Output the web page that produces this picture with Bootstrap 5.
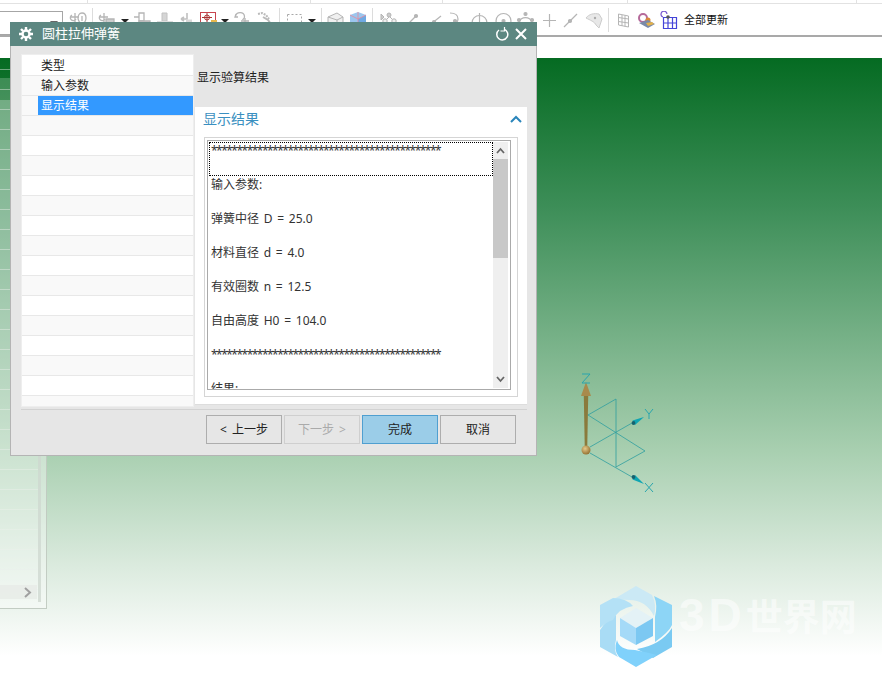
<!DOCTYPE html>
<html lang="zh-CN">
<head>
  <meta charset="UTF-8" />
  <title>圆柱拉伸弹簧</title>
  <link href="https://cdn.jsdelivr.net/npm/bootstrap@5.3.0/dist/css/bootstrap.min.css" rel="stylesheet">
  <style>
    html, body { height: 100%; }
    body { font-family: "Noto Sans", "Noto Sans CJK SC", sans-serif; font-size: 12px; color: #222; background: #fff; overflow: hidden; }
    .app-page { height: 681px; width: 882px; position: relative; }

    /* toolbar */
    .tool-bar { height: 37px; border-bottom: 2px solid #a9a9a9; position: relative; }
    .tool-top { height: 4px; border-bottom: 1px solid #e2e2e2; display: flex; }
    .tool-tick { border-right: 1px solid #e2e2e2; }
    .tick-a { width: 88px; } .tick-b { width: 223px; } .tick-c { width: 132px; } .tick-d { width: 185px; } .tick-e { width: 229px; }
    .tool-row { display: grid; height: 24px; margin-top: 7px;
      grid-template-columns: 64px 28px 2px 26px 10px 24px 22px 20px 24px 10px 22px 27px 2px 26px 10px 4px 2px 24px 25px 2px 30px 26px 16px 22px 22px 24px 22px 22px 26px 24px 2px 24px 25px 23px auto; }
    .tool-row svg { display: block; height: 24px; width: 100%; }
    .tool-combo { height: 24px; width: 63px; border: 1px solid #a6a6a6; border-left: 0; position: relative; }
    .tool-combo::after { content: ""; position: absolute; right: 4px; top: 9px; border: 4px solid transparent; border-top: 5px solid #666; }
    .tool-sep { width: 1px; background: #dcdcdc; height: 24px; margin-top: -3px; }
    .tool-caret { align-self: center; justify-self: center; border: 4px solid transparent; border-top: 4px solid #222; margin-top: -1px; }
    .tool-label { font-size: 11px; color: #111; line-height: 17px; white-space: nowrap; margin-left: 2px; }
    .tool-gap { height: 21px; }

    /* modelling canvas */
    .model-view { height: 623px; position: relative;
      background: linear-gradient(180deg, #056b22 0%, #3d8e58 24%, #a8cfb0 63%, #dcebdf 82%, #ffffff 96%); }
    .side-panel { position: absolute; left: 0; top: 0; width: 47px; height: 551px; border-right: 1px solid rgba(190,200,190,.9); border-bottom: 1px solid rgba(190,200,190,.9); display: flex;
      background: linear-gradient(180deg, transparent 0 20px, rgba(255,255,255,.2) 20px 42px, rgba(255,255,255,.4) 42px); }
    .side-rows { width: 38px; background: repeating-linear-gradient(180deg, transparent 0 19px, rgba(235,240,235,.45) 19px 20px); background-position: 0 -8px; position: relative; }
    .side-hscroll { position: absolute; left: 0; right: 1px; bottom: 9px; height: 14px; background: rgba(232,236,232,.9); }
    .side-hscroll svg { position: absolute; right: 4px; top: 2px; }
    .side-vscroll { width: 3px; margin-bottom: 6px; background: rgba(205,215,207,.75); }
    .triad-svg { position: absolute; left: 570px; top: 310px; }
    .brand-wrap { position: absolute; left: 600px; top: 528px; display: flex; align-items: center; gap: 6px; }
    .brand-name { color: rgba(255,255,255,.55); font-weight: 700; line-height: 1; white-space: nowrap; margin-top: -24px; font-family: "Liberation Sans", "Noto Sans CJK SC", sans-serif; }
    .brand-latin { font-size: 46px; letter-spacing: 4px; }
    .brand-cjk { font-size: 37px; }

    /* dialog */
    .nx-dialog { position: absolute; left: 10px; top: 22px; width: 527px; height: 434px; background: #e6e6e6; border: 1px solid #b4b4b4; border-top: 0; }
    .nx-title { height: 24px; margin: 0 -1px; background: #5c8781; color: #fff; font-size: 13px; padding: 0 9px 0 8px; }
    .nx-title-text { margin-left: 8px; }
    .nx-close { margin-left: 5px; }
    .nx-main { display: flex; gap: 1px; height: 353px; margin: 8px 9px 0 10px; }
    .step-list { width: 173px; overflow: hidden; background: #fff; border: 1px solid #eee; border-radius: 0; flex: none; }
    .step-list .list-group-item { flex: none; height: 20px; padding: 0 0 0 19px; font-size: 12px; line-height: 19px; background: #fff; border: 0; border-bottom: 1px solid #e8e8e8; color: #222; }
    .step-list .list-group-item:first-child { height: 21px; line-height: 21px; }
    .step-list .list-group-item:nth-child(even) { background: #f9f9f9; }
    .step-list .step-on { background: linear-gradient(90deg, #f9f9f9 0 16px, #3399ff 16px) !important; color: #fff; }
    .right-pane { flex: 1; min-width: 0; }
    .step-head { height: 53px; padding: 14px 0 0 2px; line-height: 20px; color: #222; }
    .res-group { height: 298px; background: #fff; border-bottom: 1px solid #ddd; }
    .res-head { height: 30px; padding: 0 5px 7px 8px; color: #3a8fc0; font-size: 14px; }
    .res-outer { margin-left: 9px; width: 314px; height: 260px; border: 1px solid #d5d5d5; padding: 2px; }
    .res-box { height: 250px; width: 304px; border: 1px solid #aaa; display: flex; overflow: hidden; }
    .res-text { flex: 1; min-width: 0; padding: 1px 0 0 1px; overflow: hidden; }
    .res-line { height: 34px; line-height: 17px; padding-left: 2px; white-space: nowrap; color: #333; word-spacing: 1.6px; }
    .res-first { width: 284px; border: 1px dotted #000; padding-left: 1px; line-height: 15px; }
    .res-stars { letter-spacing: -1.52px; }
    .res-scroll { width: 15px; margin: 1px 2px 1px 0; background: #efefef; display: flex; flex-direction: column; flex: none; }
    .res-arrow { height: 17px; display: flex; align-items: center; justify-content: center; }
    .res-thumb { height: 99px; background: #c8c8c8; }
    .nx-foot { margin: 2px 9px 0 10px; border-top: 1px solid #d2d2d2; padding: 5px 0 0 185px; }
    .nx-btn { width: 76px; height: 29px; padding: 0; font-size: 12px; line-height: 26px; border-radius: 0; border: 1px solid #adadad; background: #e6e6e6; color: #222; font-family: inherit; word-spacing: 2px; }
    .nx-btn:disabled { background: #e6e6e6; border-color: #cfcfcf; color: #aaa; opacity: 1; }
    .nx-btn-main { background: #9bcde8; border-color: #4f9fd0; }
    .nx-btn-row { gap: 2px; }
  </style>
</head>
<body>
<div class="app-page">

  <!-- toolbar -->
  <div class="tool-bar">
    <div class="tool-top">
      <div class="tool-tick tick-a"></div><div class="tool-tick tick-b"></div><div class="tool-tick tick-c"></div><div class="tool-tick tick-d"></div><div class="tool-tick tick-e"></div>
    </div>
    <div class="tool-row">
      <div class="tool-combo"></div>
      <svg viewBox="64 11 28 24" fill="none" stroke="#b5b5b5" stroke-width="1.3"><path d="M75 13v11M70 17h9M72 15a3 3 0 1 0 4 4"/><path d="M82 13c-3 0-4 3-4 5s2 6 4 6 4-3 4-6-1-5-4-5zM82 16v5"/></svg>
      <div class="tool-sep"></div>
      <svg viewBox="94 11 26 24" fill="none" stroke="#b5b5b5" stroke-width="1.3"><path d="M104 13v11M99 17h9M101 15a3 3 0 1 0 4 4"/><path d="M106 19h8v5h-8z" fill="#ccc"/></svg>
      <div class="tool-caret"></div>
      <svg viewBox="130 11 24 24" fill="none" stroke="#b5b5b5" stroke-width="1.3"><path d="M139 13h5v8h-5zM134 17h5"/><path d="M139 21h11v4h-11z" fill="#d2d2d2"/></svg>
      <svg viewBox="154 11 22 24" fill="none"><path d="M162 13h5v8h-5z" fill="#d5d5d5" stroke="#c2c2c2"/><path d="M157 21h16v4h-16z" fill="#dedede"/></svg>
      <svg viewBox="176 11 20 24" fill="none" stroke="#c0c0c0" stroke-width="1.6"><path d="M187 13v6h-6M181 19l3-2M181 19l3 2"/><path d="M186 21h6" stroke="#d8d8d8" stroke-width="3"/></svg>
      <svg viewBox="196 11 24 24" fill="none"><rect x="200.500" y="12.500" width="15" height="15" fill="#fff" stroke="#c8454f"/><path d="M202 17.500h10M207 13v9" stroke="#a33" /><circle cx="207" cy="17.500" r="2.500" stroke="#a33"/><path d="M211 20h6v4h-6z" fill="#e8b84c"/></svg>
      <div class="tool-caret"></div>
      <svg viewBox="230 11 22 24" fill="none" stroke="#b5b5b5" stroke-width="1.3"><path d="M236 14l-1 3 3 0M235.500 16c1-4 8-5 9 0 .5 2-1 3-2 4"/><path d="M245 18v6M241 21h8"/></svg>
      <svg viewBox="252 11 27 24" fill="none" stroke="#bbb" stroke-width="2"><path d="M258 14l4-1 4 2 3 4" stroke-dasharray="2 1"/><path d="M263 17l5 3 3 4"/></svg>
      <div class="tool-sep"></div>
      <svg viewBox="281 11 26 24" fill="none" stroke="#a8a8a8"><path d="M287.500 14.500h14v12M287.500 14.500v12" stroke-dasharray="2 2"/></svg>
      <div class="tool-caret"></div>
      <div></div>
      <div class="tool-sep"></div>
      <svg viewBox="323 11 24 24" fill="none" stroke="#b5b5b5"><path d="M328 17l9-4 6 4v8l-9 2-6-4z" fill="#f0f0f0"/><path d="M328 17l9 3 6-3M337 20v6"/></svg>
      <svg viewBox="347 11 25 24" fill="none"><path d="M350 15l8-3 8 3v10l-8 3-8-3z" fill="#9cc6ee"/><path d="M358 19l8-4v10l-8 3z" fill="#6fa9e3"/><path d="M350 15l8 4 8-4M358 12v16" stroke="#e98a9a" stroke-width=".8"/></svg>
      <div class="tool-sep"></div>
      <svg viewBox="374 11 30 24" fill="none" stroke="#b5b5b5"><path d="M381 14l3 3-3 3z" fill="#ccc"/><circle cx="389" cy="15" r="2" fill="#ccc"/><circle cx="385" cy="21" r="2.200" fill="#eee"/><circle cx="394" cy="21" r="2.200" fill="#eee"/><path d="M387 19l2-2M392 19l-2-2"/></svg>
      <svg viewBox="404 11 26 24" fill="none" stroke="#b5b5b5" stroke-width="1.2"><path d="M408 24l8-8"/><circle cx="416" cy="16" r="1.500" fill="#b5b5b5"/></svg>
      <svg viewBox="430 11 16 24" fill="none" stroke="#b5b5b5" stroke-width="1.2"><path d="M431 24l10-8"/><circle cx="434" cy="22" r="1.500" fill="#b5b5b5"/></svg>
      <svg viewBox="446 11 22 24" fill="none" stroke="#b5b5b5" stroke-width="1.2"><path d="M450 13c6 0 8 3 8 6s-1 3-2 4"/><circle cx="455" cy="21" r="1.500" fill="#b5b5b5"/></svg>
      <svg viewBox="468 11 22 24" fill="none" stroke="#b5b5b5" stroke-width="1.2"><circle cx="479.500" cy="23" r="7.500"/><path d="M479.500 13v20M470 23h19"/></svg>
      <svg viewBox="490 11 24 24" fill="none" stroke="#b5b5b5" stroke-width="1.2"><circle cx="503.500" cy="21" r="7.500"/><circle cx="503.500" cy="21" r="1.500" fill="#b5b5b5"/></svg>
      <svg viewBox="514 11 22 24" fill="none" stroke="#b5b5b5" stroke-width="1.2"><path d="M519 22a7 7 0 0 1 13 0"/><circle cx="525.500" cy="14" r="1.500" fill="#b5b5b5"/><circle cx="519" cy="20" r="1.500" fill="#b5b5b5"/><circle cx="532" cy="20" r="1.500" fill="#b5b5b5"/></svg>
      <svg viewBox="536 11 22 24" fill="none" stroke="#b5b5b5" stroke-width="1.2"><path d="M549.500 14v13M543 20.500h13"/></svg>
      <svg viewBox="558 11 26 24" fill="none" stroke="#b5b5b5" stroke-width="1.2"><path d="M564 27l13-13"/><circle cx="570" cy="21" r="1.500" fill="#b5b5b5"/></svg>
      <svg viewBox="584 11 24 24" fill="none"><path d="M586 18c3-4 8-5 13-4l3 5-3 9-3-3c-1-3-6-5-10-7z" fill="#e8e8e8" stroke="#ccc"/><circle cx="595" cy="18" r="1.200" fill="#aaa"/></svg>
      <div class="tool-sep"></div>
      <svg viewBox="610 11 24 24" fill="none" stroke="#b5b5b5"><path d="M618.500 14l10 2v11l-10-2zM622 15v11M625 15.500v11M618.500 17.500l10 1.500M618.500 21.500l10 1.500"/></svg>
      <svg viewBox="634 11 25 24"><circle cx="643" cy="18" r="4" fill="none" stroke="#b56a9a" stroke-width="2"/><circle cx="648" cy="20" r="2.500" fill="#d98a3a"/><path d="M639 23l9-3 7 4-7 4z" fill="#7a8aa8"/><path d="M646 23l6-1 2 2-6 2z" fill="#e3b14a"/></svg>
      <svg viewBox="659 11 23 24" fill="none" stroke="#4444d8" stroke-width="1.2"><path d="M663.500 17.500h13v11h-13zM668 17.500v11M672.500 17.500v11M663.500 23h13"/><path d="M667 14a3 3 0 1 0-4 3" stroke="#7a5ad0"/><circle cx="668" cy="17" r="1.800" fill="#555" stroke="none"/></svg>
      <div class="tool-label">全部更新</div>
    </div>
  </div>
  <div class="tool-gap"></div>

  <!-- green model view -->
  <div class="model-view">
    <div class="side-panel">
      <div class="side-rows">
        <div class="side-hscroll">
          <svg width="10" height="11" viewBox="0 0 10 11" fill="none" stroke="#a0a0a0" stroke-width="2"><path d="M2 1l5 4.500-5 4.500"/></svg>
        </div>
      </div>
      <div class="side-vscroll"></div>
    </div>

    <svg class="triad-svg" width="90" height="130" viewBox="570 368 90 130" fill="none">
      <defs>
        <radialGradient id="ballFill" cx=".4" cy=".35" r=".7"><stop offset="0" stop-color="#e6c98a"/><stop offset="1" stop-color="#8f6c2c"/></radialGradient>
      </defs>
      <g stroke="#2e9ea0" stroke-width=".8">
        <path d="M588 415l28-16v68M588 415l57 36-29 16M590 447l42-24M590 453l42 24"/>
      </g>
      <path d="M583.800 396h4.400l-1 54h-2.400z" fill="#8a7a3c"/>
      <path d="M586 382l5 14h-10z" fill="#a88a4c"/>
      <circle cx="586" cy="450" r="4.500" fill="url(#ballFill)"/>
      <path d="M632.500 420.500l11.500-3.500-9 8z" fill="#0fa5b2"/>
      <circle cx="633.500" cy="423" r="1.900" fill="#17616e"/>
      <path d="M632.500 479.500l11.500 4.500-9-9z" fill="#0fa5b2"/>
      <circle cx="633.500" cy="477" r="1.900" fill="#17616e"/>
      <g stroke="#2aa5ad" stroke-width="1">
        <path d="M582 374h8l-8 9h8M645 409l4 5 4-5M649 414v5M645 483l8 9M653 483l-8 9"/>
      </g>
    </svg>

    <div class="brand-wrap">
      <svg width="73" height="82" viewBox="599 586 73 82">
        <path d="M613 599l22-13 16 9q5 10 2 21q-8-16-25-16z" fill="#cbe9f5"/>
        <path d="M653 596l18 9v20q-3 7-17 17v-25q3-12-1-21z" fill="#8dd5f6"/>
        <path d="M671 628v19l-19 11-16-9q24-4 35-21z" fill="#7acaf2"/>
        <path d="M616 640q2 10 18 10 11 2 22 5l-21 12-17-10q-6-7-2-17z" fill="#80d1fb"/>
        <path d="M599 647v-17q6-10 16-15v25q-3 10 2 17z" fill="#a9dcf5"/>
        <path d="M599 605l13-7q13 0 20 8-14 2-20 14-7 2-13 8z" fill="#b4e1f6"/>
        <path d="M635 608l17 10-17 10-16-10z" fill="#e4f2f6"/>
        <path d="M619 618l16 10v17l-16-9z" fill="#a5daf8"/>
        <path d="M652 618l-17 10v17l17-9z" fill="#7cc8f2"/>
      </svg>
      <div class="brand-name"><span class="brand-latin">3D</span><span class="brand-cjk">世界网</span></div>
    </div>
  </div>

  <!-- spring dialog -->
  <div class="nx-dialog">
    <div class="nx-title d-flex align-items-center">
      <svg width="16" height="16" viewBox="0 0 16 16" fill="none" stroke="#fff"><circle cx="8" cy="8" r="3.500" stroke-width="2.400"/><path d="M8 1v3M8 12v3M1 8h3M12 8h3M3 3l2 2M11 11l2 2M13 3l-2 2M5 11l-2 2" stroke-width="2.400"/></svg>
      <span class="nx-title-text">圆柱拉伸弹簧</span>
      <svg class="ms-auto" width="14" height="14" viewBox="0 0 14 14" fill="none" stroke="#fff" stroke-width="1.500"><path d="M4 3a5.500 5.500 0 1 0 5-.8"/><path d="M9.500 0v4h-4" stroke-width="1.200"/></svg>
      <svg class="nx-close" width="14" height="14" viewBox="0 0 14 14" fill="none" stroke="#fff" stroke-width="2"><path d="M2 2l10 10M12 2L2 12"/></svg>
    </div>

    <div class="nx-main">
      <ul class="list-group step-list">
        <li class="list-group-item">类型</li>
        <li class="list-group-item">输入参数</li>
        <li class="list-group-item step-on">显示结果</li>
        <li class="list-group-item"></li><li class="list-group-item"></li><li class="list-group-item"></li>
        <li class="list-group-item"></li><li class="list-group-item"></li><li class="list-group-item"></li>
        <li class="list-group-item"></li><li class="list-group-item"></li><li class="list-group-item"></li>
        <li class="list-group-item"></li><li class="list-group-item"></li><li class="list-group-item"></li>
        <li class="list-group-item"></li><li class="list-group-item"></li><li class="list-group-item"></li>
      </ul>

      <div class="right-pane">
        <div class="step-head">显示验算结果</div>
        <div class="res-group">
          <div class="res-head d-flex align-items-center justify-content-between">
            <span>显示结果</span>
            <svg width="12" height="8" viewBox="0 0 12 8" fill="none" stroke="#2a85bb" stroke-width="2"><path d="M1 7l5-5 5 5"/></svg>
          </div>
          <div class="res-outer">
            <div class="res-box">
              <div class="res-text">
                <div class="res-line res-first"><span class="res-stars">*********************************************</span></div>
                <div class="res-line">输入参数:</div>
                <div class="res-line">弹簧中径 D = 25.0</div>
                <div class="res-line">材料直径 d = 4.0</div>
                <div class="res-line">有效圈数 n = 12.5</div>
                <div class="res-line">自由高度 H0 = 104.0</div>
                <div class="res-line"><span class="res-stars">*********************************************</span></div>
                <div class="res-line">结果:</div>
              </div>
              <div class="res-scroll">
                <div class="res-arrow"><svg width="9" height="7" viewBox="0 0 9 7" fill="none" stroke="#666" stroke-width="1.800"><path d="M1 6l3.500-4L8 6"/></svg></div>
                <div class="res-thumb"></div>
                <div class="res-arrow mt-auto"><svg width="9" height="7" viewBox="0 0 9 7" fill="none" stroke="#666" stroke-width="1.800"><path d="M1 1l3.500 4L8 1"/></svg></div>
              </div>
            </div>
          </div>
        </div>
      </div>
    </div>

    <div class="nx-foot">
      <div class="d-flex nx-btn-row">
        <button type="button" class="btn nx-btn">&lt; 上一步</button>
        <button type="button" class="btn nx-btn" disabled>下一步 &gt;</button>
        <button type="button" class="btn nx-btn nx-btn-main">完成</button>
        <button type="button" class="btn nx-btn">取消</button>
      </div>
    </div>
  </div>

</div>
<script src="https://cdn.jsdelivr.net/npm/bootstrap@5.3.0/dist/js/bootstrap.bundle.min.js"></script>
</body>
</html>
